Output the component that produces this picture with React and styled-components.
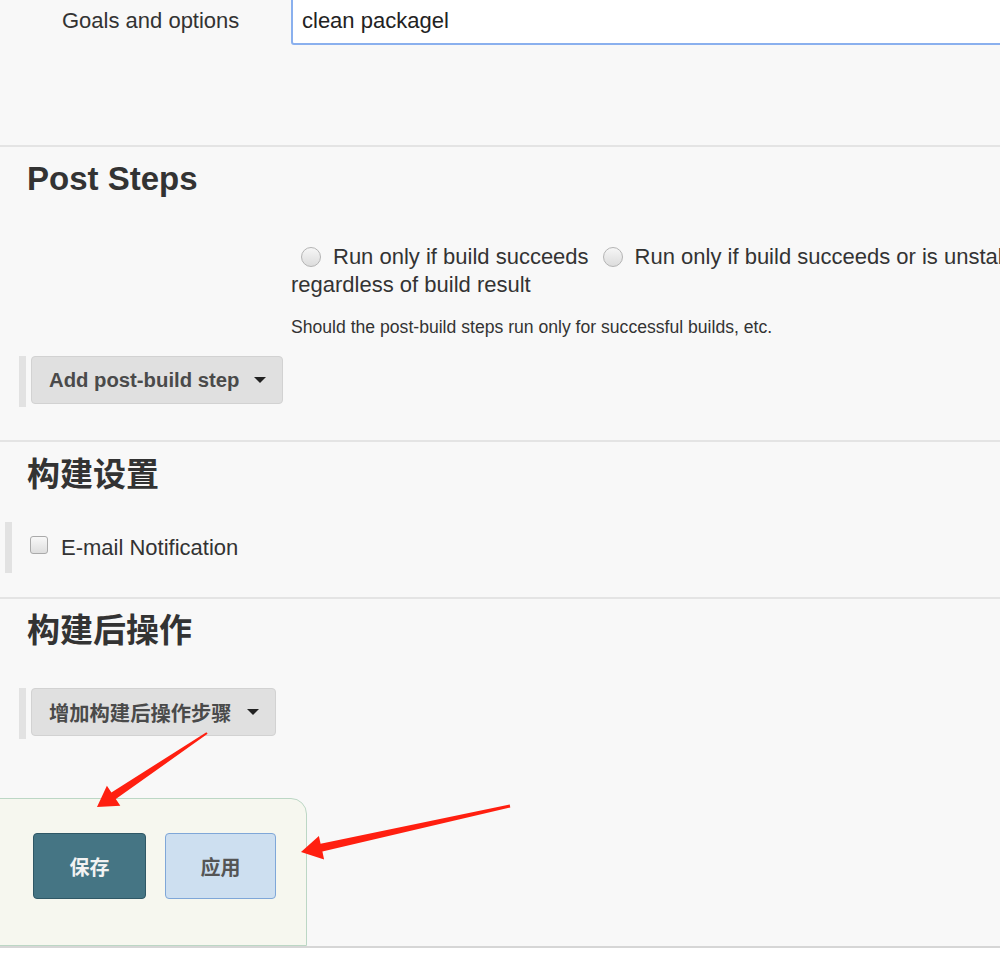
import React from 'react';
import styled, { createGlobalStyle } from 'styled-components';

const GlobalStyle = createGlobalStyle`
    html, body {
        margin: 0;
        padding: 0;
        background: #ffffff;
        overflow: hidden;
    }
    body {
        font-family: "Liberation Sans", Arial, "Noto Sans CJK SC", sans-serif;
        color: #333333;
    }
`;

const Page = styled.div`
    position: relative;
    width: 1000px;
    height: 972px;
    overflow: hidden;
`;

const Form = styled.div`
    width: 1200px;
    background: #f8f8f8;
    border-bottom: 2px solid #d6d6d6;
`;

const FieldRow = styled.div`
    display: grid;
    grid-template-columns: 291px 880px;
    align-items: start;
`;

const GoalsRow = styled(FieldRow)`
    height: 145px;
`;

const FieldLabel = styled.div`
    padding-left: 62px;
    padding-top: ${(props) => props.top || 0}px;
    font-size: 22px;
`;

const TextInput = styled.input`
    box-sizing: border-box;
    width: 100%;
    height: 48px;
    margin-top: -3px;
    padding: 0 9px;
    border: 2px solid #8ab0ee;
    border-radius: 3px;
    background: #ffffff;
    font-family: inherit;
    font-size: 22px;
    color: #222222;
    outline: none;
`;

const Section = styled.div`
    border-top: 2px solid #e4e4e4;
    padding-top: ${(props) => props.pad || 0}px;
    padding-bottom: ${(props) => props.bottom || 0}px;
`;

const Heading = styled.h2`
    margin: 0 0 0 27px;
    font-size: 33px;
    line-height: 36px;
    font-weight: 700;
    color: #333333;
    font-family: "Liberation Sans", Arial, "Noto Sans CJK SC", sans-serif;
`;

const Options = styled.div`
    margin-top: 46px;
    font-size: 22px;
    line-height: 28px;
`;

const Radio = styled.span`
    display: inline-block;
    box-sizing: border-box;
    width: 20px;
    height: 20px;
    margin: 0 12px 0 10px;
    vertical-align: -3px;
    border: 1px solid #b4b4b4;
    border-radius: 50%;
    background: linear-gradient(#f6f6f6, #dcdcdc);
`;

const OptionText = styled.span`
    margin-right: 4px;
`;

const Help = styled.div`
    margin-top: 18px;
    font-size: 17.6px;
    line-height: 20px;
    color: #333333;
`;

const StepBar = styled.div`
    display: flex;
    align-items: flex-start;
    margin-left: 19px;
    margin-top: ${(props) => props.top}px;
    height: 51px;
    padding-left: 5px;
    border-left: 7px solid #e2e2e2;
`;

const DropButton = styled.button`
    display: flex;
    align-items: center;
    gap: 15px;
    height: 48px;
    padding: 0 16px 0 17px;
    border: 1px solid #d2d2d2;
    border-radius: 4px;
    background: #e0e0e0;
    font-family: "Liberation Sans", Arial, "Noto Sans CJK SC", sans-serif;
    font-size: 20.3px;
    font-weight: 700;
    color: #4a4a4a;
`;

const Caret = styled.span`
    width: 0;
    height: 0;
    border-left: 6px solid transparent;
    border-right: 6px solid transparent;
    border-top: 6px solid #222222;
`;

const CheckRow = styled.label`
    display: flex;
    align-items: center;
    gap: 13px;
    height: 51px;
    margin-top: 29px;
    margin-left: 5px;
    padding-left: 18px;
    border-left: 7px solid #e2e2e2;
    font-size: 22px;
`;

const CheckBox = styled.span`
    box-sizing: border-box;
    width: 18px;
    height: 18px;
    margin-top: -6px;
    border: 1px solid #aaaaaa;
    border-radius: 3px;
    background: linear-gradient(#f8f8f8, #dedede);
`;

const BottomBar = styled.div`
    display: flex;
    gap: 19px;
    box-sizing: border-box;
    width: 308px;
    height: 148px;
    margin-top: 59px;
    margin-left: -1px;
    padding: 34px 0 0 33px;
    background: #f6f7ef;
    border: 1px solid #bcd7c5;
    border-top-right-radius: 16px;
`;

const ActionButton = styled.button`
    width: ${(props) => props.width}px;
    height: 66px;
    border-radius: 4px;
    border: 1px solid ${(props) => (props.primary ? '#2f5866' : '#7fa7d8')};
    background: ${(props) => (props.primary ? '#457584' : '#cddff0')};
    color: ${(props) => (props.primary ? '#f2f2f2' : '#555555')};
    font-family: "Noto Sans CJK SC", sans-serif;
    font-size: 20px;
    font-weight: 700;
`;

const Arrows = styled.svg`
    position: absolute;
    left: 0;
    top: 0;
    pointer-events: none;
`;

const App = () => {
    return (
        <Page>
            <GlobalStyle />
            <Form>
                <GoalsRow>
                    <FieldLabel top={8}>Goals and options</FieldLabel>
                    <TextInput defaultValue="clean packagel" />
                </GoalsRow>

                <Section pad={14} bottom={33}>
                    <Heading>Post Steps</Heading>
                    <FieldRow>
                        <div />
                        <div>
                            <Options>
                                <Radio /><OptionText>Run only if build succeeds</OptionText>
                                <Radio /><OptionText>Run only if build succeeds or is unstable</OptionText>
                                <Radio /><span>Run regardless of build result</span>
                            </Options>
                            <Help>Should the post-build steps run only for successful builds, etc.</Help>
                        </div>
                    </FieldRow>
                    <StepBar top={19}>
                        <DropButton>Add post-build step<Caret /></DropButton>
                    </StepBar>
                </Section>

                <Section pad={15} bottom={24}>
                    <Heading>构建设置</Heading>
                    <CheckRow>
                        <CheckBox />E-mail Notification
                    </CheckRow>
                </Section>

                <Section pad={14}>
                    <Heading>构建后操作</Heading>
                    <StepBar top={39}>
                        <DropButton>增加构建后操作步骤<Caret /></DropButton>
                    </StepBar>
                    <BottomBar>
                        <ActionButton primary width={113}>保存</ActionButton>
                        <ActionButton width={111}>应用</ActionButton>
                    </BottomBar>
                </Section>
            </Form>

            <Arrows width="1000" height="972" viewBox="0 0 1000 972">
                <polygon
                    fill="#ff1f10"
                    points="207.6,733.8 115.8,799.1 120.3,805.8 97,807 106.9,785.8 111.4,792.5 206.4,732.2"
                />
                <polygon
                    fill="#ff1f10"
                    points="510.3,807.5 322.4,851.6 324.1,859.4 301,852 318.9,836 320.6,843.8 509.7,804.5"
                />
            </Arrows>
        </Page>
    );
};

export default App;
